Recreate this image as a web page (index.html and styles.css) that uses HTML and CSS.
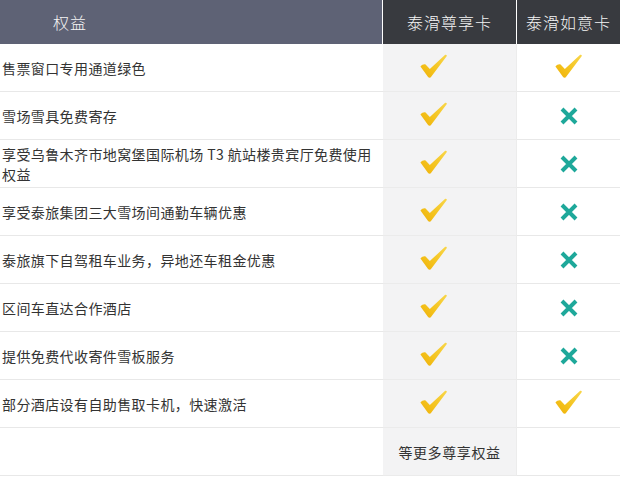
FILE: index.html
```html
<!DOCTYPE html>
<html lang="zh-CN">
<head>
<meta charset="utf-8">
<link rel="stylesheet" href="styles.css">
</head>
<body>
<svg width="0" height="0" class="defs">
  <defs>
    <linearGradient id="gold" x1="1" y1="0" x2="0" y2="1">
      <stop offset="0" stop-color="#f8d64a"/>
      <stop offset="0.6" stop-color="#f4c21c"/>
      <stop offset="1" stop-color="#eeb00a"/>
    </linearGradient>
    <symbol id="check" viewBox="0 0 30 26">
      <path d="M1.5 13.5 C3 11.8 5 10.8 6.8 11.4 L11.2 16.2 L26.8 1.6 C28.2 0.8 29.2 1.8 28.6 3 L12.8 23.8 C11.8 25.4 10.2 25.4 9.2 24 Z" fill="url(#gold)"/>
    </symbol>
    <symbol id="cross" viewBox="0 0 20 18">
      <path d="M3 2 L17 16 M17 2 L3 16" stroke="#1ea89a" stroke-width="4" fill="none"/>
    </symbol>
  </defs>
</svg>
<div class="table">
  <div class="th th-main">权益</div>
  <div class="th th-card">泰滑尊享卡</div>
  <div class="th th-card th-last">泰滑如意卡</div>

  <div class="td td-text">售票窗口专用通道绿色</div>
  <div class="td td-a"><svg class="ic-check"><use href="#check"/></svg></div>
  <div class="td td-b"><svg class="ic-check"><use href="#check"/></svg></div>

  <div class="td td-text">雪场雪具免费寄存</div>
  <div class="td td-a"><svg class="ic-check"><use href="#check"/></svg></div>
  <div class="td td-b"><svg class="ic-cross"><use href="#cross"/></svg></div>

  <div class="td td-text">享受乌鲁木齐市地窝堡国际机场 T3 航站楼贵宾厅免费使用权益</div>
  <div class="td td-a"><svg class="ic-check"><use href="#check"/></svg></div>
  <div class="td td-b"><svg class="ic-cross"><use href="#cross"/></svg></div>

  <div class="td td-text">享受泰旅集团三大雪场间通勤车辆优惠</div>
  <div class="td td-a"><svg class="ic-check"><use href="#check"/></svg></div>
  <div class="td td-b"><svg class="ic-cross"><use href="#cross"/></svg></div>

  <div class="td td-text">泰旅旗下自驾租车业务，异地还车租金优惠</div>
  <div class="td td-a"><svg class="ic-check"><use href="#check"/></svg></div>
  <div class="td td-b"><svg class="ic-cross"><use href="#cross"/></svg></div>

  <div class="td td-text">区间车直达合作酒店</div>
  <div class="td td-a"><svg class="ic-check"><use href="#check"/></svg></div>
  <div class="td td-b"><svg class="ic-cross"><use href="#cross"/></svg></div>

  <div class="td td-text">提供免费代收寄件雪板服务</div>
  <div class="td td-a"><svg class="ic-check"><use href="#check"/></svg></div>
  <div class="td td-b"><svg class="ic-cross"><use href="#cross"/></svg></div>

  <div class="td td-text">部分酒店设有自助售取卡机，快速激活</div>
  <div class="td td-a"><svg class="ic-check"><use href="#check"/></svg></div>
  <div class="td td-b"><svg class="ic-check"><use href="#check"/></svg></div>

  <div class="td td-text"></div>
  <div class="td td-a td-more">等更多尊享权益</div>
  <div class="td td-b"></div>
</div>
</body>
</html>
```

FILE: styles.css
```css
html, body {
  margin: 0;
  padding: 0;
  background: #ffffff;
}
body {
  width: 620px;
  height: 479px;
  overflow: hidden;
  font-family: "Noto Sans CJK SC", "Noto Sans", sans-serif;
  color: #333333;
}
.defs {
  position: absolute;
  width: 0;
  height: 0;
}
.table {
  display: grid;
  grid-template-columns: 383px 134px 103px;
  grid-template-rows: 44px repeat(9, 48px);
}
.th {
  display: flex;
  align-items: center;
  color: #f4f4f4;
  font-size: 16px;
  letter-spacing: 1px;
  font-weight: 300;
}
.th-main {
  background: #5e6275;
  padding-left: 53px;
  border-right: 1px solid #ffffff;
}
.th-card {
  background: #383a3f;
  justify-content: center;
  border-right: 1px solid #ffffff;
}
.th-last {
  border-right: none;
}
.td {
  display: flex;
  align-items: center;
  border-bottom: 1px solid #e8e8e8;
  box-sizing: border-box;
}
.td-text {
  font-size: 14px;
  letter-spacing: 0.4px;
  line-height: 20px;
  padding: 0 4px 0 2px;
  background: #ffffff;
}
.td-a {
  background: #f3f3f4;
  border-bottom-color: #ebebeb;
  border-right: 1px solid #ececec;
  padding-left: 36px;
}
.td-b {
  background: #ffffff;
  justify-content: center;
}
.td-more {
  padding-left: 0;
  justify-content: center;
  font-size: 14px;
  letter-spacing: 0.6px;
}
.ic-check {
  width: 29px;
  height: 26px;
  margin-top: -3px;
}
.ic-cross {
  width: 20px;
  height: 18px;
}
```
